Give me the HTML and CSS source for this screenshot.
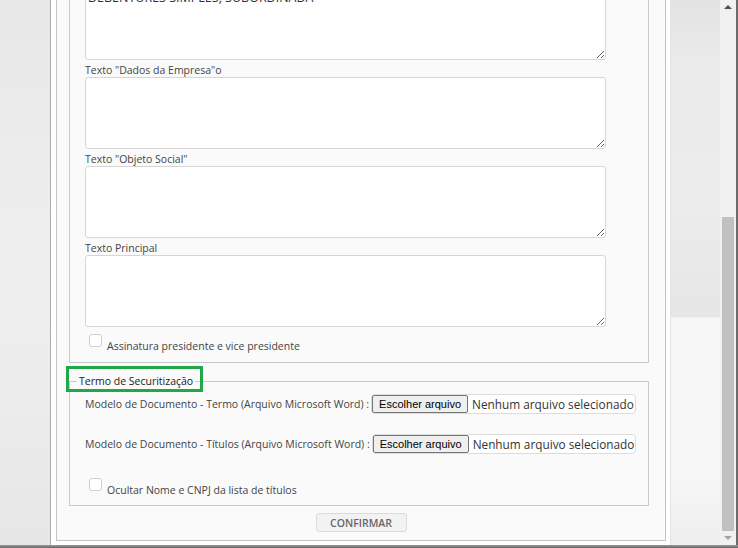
FILE: index.html
```html
<!DOCTYPE html>
<html lang="pt-BR">
<head>
<meta charset="utf-8">
<title>Termo de Securitização</title>
<link rel="stylesheet" href="styles.css">
</head>
<body>
<div class="screen">
  <div class="bg-left"></div>
  <div class="dialog">
    <div class="panel">
      <fieldset class="group group-top">
        <div class="group-body">
          <textarea class="field field-first">DEBENTURES SIMPLES, SUBORDINADA</textarea>
          <label class="field-label">Texto "Dados da Empresa"o</label>
          <textarea class="field"></textarea>
          <label class="field-label">Texto "Objeto Social"</label>
          <textarea class="field"></textarea>
          <label class="field-label">Texto Principal</label>
          <textarea class="field"></textarea>
          <label class="check-row"><span class="check"></span><span class="check-text">Assinatura presidente e vice presidente</span></label>
        </div>
      </fieldset>
      <fieldset class="group group-termo">
        <legend class="group-legend">Termo de Securitização<span class="highlight"></span></legend>
        <div class="group-body">
          <div class="file-row">
            <span class="file-label">Modelo de Documento - Termo (Arquivo Microsoft Word) :</span>
            <span class="file-input"><span class="file-btn">Escolher arquivo</span><span class="file-name">Nenhum arquivo selecionado</span></span>
          </div>
          <div class="file-row">
            <span class="file-label">Modelo de Documento - Títulos (Arquivo Microsoft Word) :</span>
            <span class="file-input"><span class="file-btn">Escolher arquivo</span><span class="file-name">Nenhum arquivo selecionado</span></span>
          </div>
          <label class="check-row"><span class="check"></span><span class="check-text">Ocultar Nome e CNPJ da lista de títulos</span></label>
        </div>
      </fieldset>
      <div class="actions"><button class="btn-confirm" type="button">CONFIRMAR</button></div>
    </div>
  </div>
  <div class="bg-right"></div>
  <div class="scrollbar">
    <div class="sb-btn"><span class="arrow-up"></span></div>
    <div class="sb-track"><div class="sb-thumb"></div></div>
    <div class="sb-btn"><span class="arrow-down"></span></div>
  </div>
  <div class="edge"></div>
</div>
<div class="bottom-band"></div>
</body>
</html>
```

FILE: styles.css
```css
* { box-sizing: border-box; }
html, body { margin: 0; padding: 0; }
body {
  width: 738px;
  height: 548px;
  overflow: hidden;
  font-family: "Open Sans", "Liberation Sans", sans-serif;
  font-size: 10.5px;
  color: #444;
  background: #e9e9e9;
  display: flex;
  flex-direction: column;
}
.screen {
  display: flex;
  height: 545px;
  overflow: hidden;
  flex: none;
}
.bg-left {
  width: 50px;
  flex: none;
  background: linear-gradient(to bottom, #e7e7e7 0, #ebebeb 120px, #eeeeee 260px, #ececec 400px, #e6e6e6 545px);
}
.dialog {
  width: 621px;
  flex: none;
  display: flex;
  flex-direction: column;
  background: #fff;
  border-left: 1px solid #acacac;
  border-right: 1px solid #e4e4e4;
  padding: 0 4px 4px 5px;
}
.panel {
  flex: 1;
  background: #fafafa;
  border: 1px solid #c4c4c4;
  border-top: 0;
}
.group {
  margin: 0 16px 0 12px;
  padding: 0 10px 0 7px;
  border: 1px solid #cbcbcb;
  min-width: 0;
}
.group-top {
  margin-top: -12px;
  border-top: 0;
  padding-bottom: 9px;
}
.group-body { padding-left: 8px; }
.field {
  display: block;
  width: 521px;
  height: 72px;
  margin: 0;
  padding: 2px;
  border: 1px solid #d6d6d6;
  border-radius: 3px;
  background: #fff;
  font-family: "Open Sans", "Liberation Sans", sans-serif;
  font-size: 12.5px;
  line-height: 14px;
  color: #333;
  resize: both;
}
.field-label {
  display: block;
  margin-top: 3px;
  line-height: 14px;
}
.check-row {
  display: flex;
  align-items: flex-start;
  margin-top: 7px;
  margin-left: 4px;
}
.check {
  flex: none;
  width: 13px;
  height: 13px;
  border: 1px solid #cfcfcf;
  border-radius: 3px;
  background: #fff;
}
.check-text {
  margin: 5px 0 0 5px;
  line-height: 14px;
  white-space: nowrap;
}
.group-termo {
  margin-top: 11px;
  padding-bottom: 8px;
}
.group-legend {
  position: relative;
  margin: 0;
  padding: 0 2px;
  line-height: 14px;
  color: #222;
  font-weight: 500;
}
.highlight {
  position: absolute;
  left: -11px;
  top: -8px;
  right: -8px;
  bottom: -4px;
  border: 3px solid #21a648;
}
.file-row {
  display: flex;
  align-items: center;
  height: 20px;
  gap: 2px;
  white-space: nowrap;
}
.file-row:first-child { margin-top: 6px; }
.file-row + .file-row { margin-top: 20px; }
.group-termo .check-row { margin-top: 24px; }
.file-label {
  flex: none;
  white-space: nowrap;
}
.file-input {
  flex: none;
  display: inline-flex;
  align-items: center;
  height: 20px;
  border: 1px solid #dcdcdc;
  border-radius: 4px;
  background: #fff;
  padding-right: 1px;
  white-space: nowrap;
}
.file-btn {
  flex: none;
  display: inline-flex;
  align-items: center;
  height: 18px;
  padding: 0 6px;
  border: 1px solid #767676;
  border-radius: 2px;
  background: #efefef;
  color: #000;
  font-family: "Liberation Sans", Arial, sans-serif;
  font-size: 11px;
  white-space: nowrap;
}
.file-name {
  flex: none;
  margin-left: 4px;
  font-size: 11.8px;
  color: #333;
  white-space: nowrap;
}
.actions {
  display: flex;
  justify-content: center;
  padding-top: 7px;
}
.btn-confirm {
  width: 91px;
  height: 19px;
  padding: 0;
  border: 1px solid #dadada;
  border-radius: 3px;
  background: #f2f2f2;
  color: #666;
  font-family: "Open Sans", "Liberation Sans", sans-serif;
  font-size: 10.5px;
  font-weight: 600;
}
.bg-right {
  width: 49px;
  flex: none;
  background: linear-gradient(to bottom, #e3e3e3 0, #eaeaea 60px, #ececec 200px, #e6e6e6 317px, #f7f7f7 318px, #f7f7f7 470px, #eeeeee 545px);
}
.scrollbar {
  width: 16px;
  flex: none;
  display: flex;
  flex-direction: column;
  background: #f1f1f1;
}
.sb-btn {
  height: 14px;
  flex: none;
  display: flex;
  align-items: center;
  justify-content: center;
}
.arrow-up {
  width: 0;
  height: 0;
  border-left: 4px solid transparent;
  border-right: 4px solid transparent;
  border-bottom: 4px solid #505050;
}
.arrow-down {
  width: 0;
  height: 0;
  border-left: 4px solid transparent;
  border-right: 4px solid transparent;
  border-top: 4px solid #a3a3a3;
}
.sb-track {
  flex: 1;
  display: flex;
  flex-direction: column;
  padding-top: 203px;
}
.sb-thumb {
  flex: 1;
  margin: 0 2px;
  background: #c1c1c1;
}
.edge {
  width: 2px;
  flex: none;
  background: #6b6b6b;
}
.bottom-band {
  height: 3px;
  flex: none;
  background: linear-gradient(to bottom, #9a9a9a, #666666);
}
```
